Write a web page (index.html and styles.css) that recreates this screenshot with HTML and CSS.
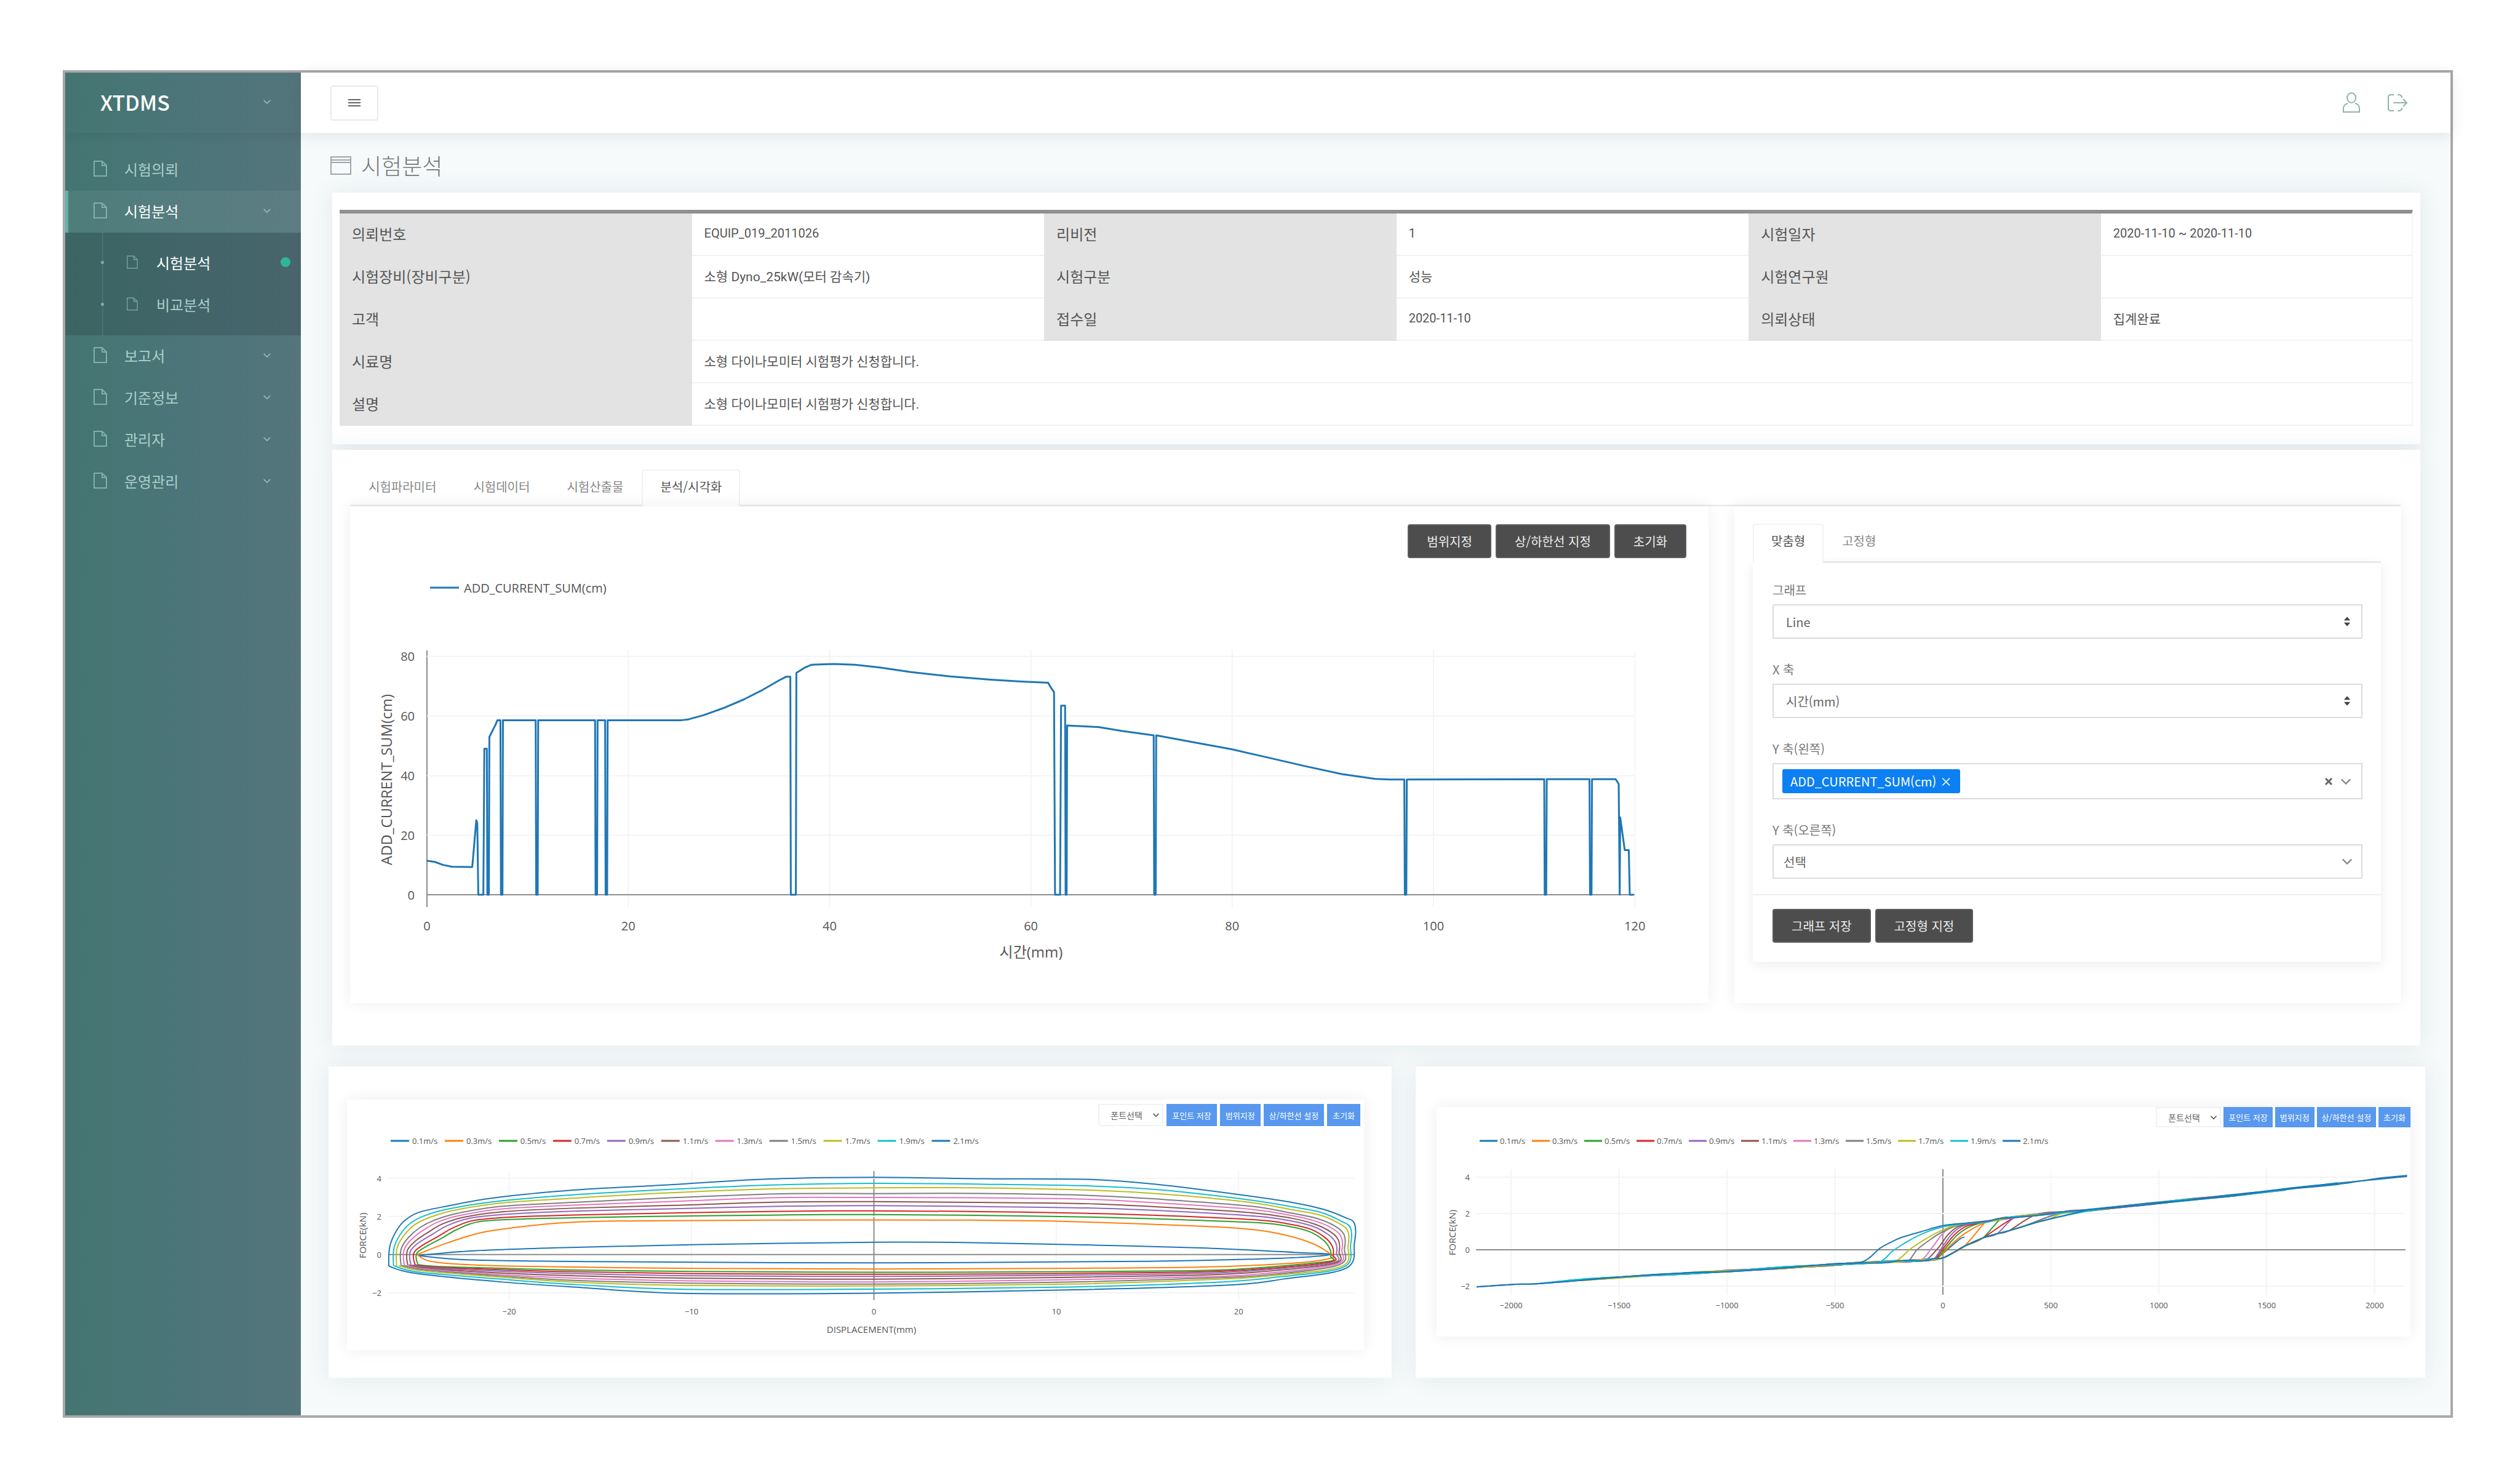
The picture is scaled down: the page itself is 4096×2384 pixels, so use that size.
FILE: index.html
```html
<!DOCTYPE html>
<html lang="ko">
<head>
<meta charset="utf-8">
<title>XTDMS 시험분석</title>
<link rel="stylesheet" href="styles.css">
</head>
<body>
<svg class="sprite" aria-hidden="true">
  <symbol id="i-doc" viewBox="0 0 22 26"><path d="M1 1h13l7 7v17H1zM14 1v7h7" fill="none" stroke="currentColor" stroke-width="2"/></symbol>
  <symbol id="i-down" viewBox="0 0 16 10"><path d="M2 2l6 6 6-6" fill="none" stroke="currentColor" stroke-width="2"/></symbol>
  <symbol id="i-sort" viewBox="0 0 14 20"><path d="M1 8l6-7 6 7zM1 12l6 7 6-7z" fill="currentColor"/></symbol>
</svg>
<div class="frame">
  <aside class="sidebar">
    <a class="brand" href="#"><span>XTDMS</span><svg class="chev"><use href="#i-down"/></svg></a>
    <nav class="menu">
      <a class="item" href="#"><svg class="doc"><use href="#i-doc"/></svg><span>시험의뢰</span></a>
      <a class="item active" href="#"><svg class="doc"><use href="#i-doc"/></svg><span>시험분석</span><svg class="chev"><use href="#i-down"/></svg></a>
      <div class="submenu">
        <a class="subitem current" href="#"><svg class="doc"><use href="#i-doc"/></svg><span>시험분석</span><i class="dot"></i></a>
        <a class="subitem" href="#"><svg class="doc"><use href="#i-doc"/></svg><span>비교분석</span></a>
      </div>
      <a class="item" href="#"><svg class="doc"><use href="#i-doc"/></svg><span>보고서</span><svg class="chev"><use href="#i-down"/></svg></a>
      <a class="item" href="#"><svg class="doc"><use href="#i-doc"/></svg><span>기준정보</span><svg class="chev"><use href="#i-down"/></svg></a>
      <a class="item" href="#"><svg class="doc"><use href="#i-doc"/></svg><span>관리자</span><svg class="chev"><use href="#i-down"/></svg></a>
      <a class="item" href="#"><svg class="doc"><use href="#i-doc"/></svg><span>운영관리</span><svg class="chev"><use href="#i-down"/></svg></a>
    </nav>
  </aside>
  <div class="main">
    <header class="topbar">
      <button class="toggle" type="button" aria-label="메뉴"><svg viewBox="0 0 20 16" width="20" height="16"><path d="M0 3h20M0 8h20M0 13h20" stroke="#666" stroke-width="2"/></svg></button>
      <div class="user">
        <button class="plain" type="button" aria-label="사용자"><svg viewBox="0 0 30 34" width="30" height="34" fill="none" stroke="#8db5a8" stroke-width="2"><ellipse cx="15" cy="9" rx="7" ry="8"/><path d="M9 18C4 19 2 22 2 27v5h26v-5c0-5-2-8-7-9"/></svg></button>
        <button class="plain" type="button" aria-label="로그아웃"><svg viewBox="0 0 34 30" width="34" height="30" fill="none" stroke="#8db5a8" stroke-width="2"><path d="M11 2H6Q2 2 2 6v18q0 4 4 4h5M17 2h2q5 0 5 5M17 28h2q5 0 5-5M10 15h22M26 9l6 6-6 6"/></svg></button>
      </div>
    </header>
    <h1 class="title"><svg viewBox="0 0 34 30" width="34" height="30" fill="none" stroke="#a0a5a8" stroke-width="2"><path d="M1 1h32v28H1zM1 10h32M1 6h32"/></svg>시험분석</h1>

    <section class="card info">
      <table>
        <colgroup><col class="c"><col class="c"><col class="c"><col class="c"><col class="c"><col></colgroup>
        <tr><th scope="row">의뢰번호</th><td class="num">EQUIP_019_2011026</td><th scope="row">리비전</th><td class="num">1</td><th scope="row">시험일자</th><td class="num">2020-11-10 ~ 2020-11-10</td></tr>
        <tr><th scope="row">시험장비(장비구분)</th><td>소형 Dyno_25kW(모터 감속기)</td><th scope="row">시험구분</th><td>성능</td><th scope="row">시험연구원</th><td></td></tr>
        <tr><th scope="row">고객</th><td></td><th scope="row">접수일</th><td class="num">2020-11-10</td><th scope="row">의뢰상태</th><td>집계완료</td></tr>
        <tr><th scope="row">시료명</th><td colspan="5">소형 다이나모미터 시험평가 신청합니다.</td></tr>
        <tr><th scope="row">설명</th><td colspan="5">소형 다이나모미터 시험평가 신청합니다.</td></tr>
      </table>
    </section>

    <section class="card analysis">
      <div class="tabs" role="tablist">
        <button class="tab" type="button" role="tab">시험파라미터</button>
        <button class="tab" type="button" role="tab">시험데이터</button>
        <button class="tab" type="button" role="tab">시험산출물</button>
        <button class="tab on" type="button" role="tab" aria-selected="true">분석/시각화</button>
      </div>
      <div class="split">
        <div class="panel plot">
          <div class="tools">
            <button class="dark" type="button">범위지정</button>
            <button class="dark" type="button">상/하한선 지정</button>
            <button class="dark" type="button">초기화</button>
          </div>
          <svg class="chart big" id="chart-sum" viewBox="0 0 2208 720"></svg>
        </div>
        <div class="panel options">
          <div class="tabs inner" role="tablist">
            <button class="tab on" type="button" role="tab" aria-selected="true">맞춤형</button>
            <button class="tab" type="button" role="tab">고정형</button>
          </div>
          <form class="form">
            <div class="group">
              <label for="graph">그래프</label>
              <div class="field"><select id="graph"><option>Line</option></select><svg class="sort"><use href="#i-sort"/></svg></div>
            </div>
            <div class="group">
              <label for="xaxis">X 축</label>
              <div class="field"><select id="xaxis"><option>시간(mm)</option></select><svg class="sort"><use href="#i-sort"/></svg></div>
            </div>
            <div class="group">
              <label for="yleft">Y 축(왼쪽)</label>
              <div class="multi">
                <button class="tag" type="button">ADD_CURRENT_SUM(cm) <span>×</span></button>
                <input id="yleft" type="text">
                <button class="clear" type="button" aria-label="지우기"><svg viewBox="0 0 14 14" width="14" height="14"><path d="M2 2l10 10M12 2L2 12" stroke="#666" stroke-width="3"/></svg></button>
                <svg class="arrow"><use href="#i-down"/></svg>
              </div>
            </div>
            <div class="group">
              <label for="yright">Y 축(오른쪽)</label>
              <div class="field near"><select id="yright"><option>선택</option></select><svg class="arrow"><use href="#i-down"/></svg></div>
            </div>
            <div class="actions">
              <button class="dark" type="button">그래프 저장</button>
              <button class="dark" type="button">고정형 지정</button>
            </div>
          </form>
        </div>
      </div>
    </section>

    <div class="pair">
      <section class="card left">
        <div class="panel">
          <div class="minitools">
            <div class="field mini"><select aria-label="폰트선택"><option>폰트선택</option></select><svg class="tiny"><use href="#i-down"/></svg></div>
            <button class="blue" type="button">포인트 저장</button>
            <button class="blue" type="button">범위지정</button>
            <button class="blue" type="button">상/하한선 설정</button>
            <button class="blue" type="button">초기화</button>
          </div>
          <svg class="chart" id="chart-disp" viewBox="0 0 1654 364"></svg>
        </div>
      </section>
      <section class="card right">
        <div class="panel">
          <div class="minitools">
            <div class="field mini"><select aria-label="폰트선택"><option>폰트선택</option></select><svg class="tiny"><use href="#i-down"/></svg></div>
            <button class="blue" type="button">포인트 저장</button>
            <button class="blue" type="button">범위지정</button>
            <button class="blue" type="button">상/하한선 설정</button>
            <button class="blue" type="button">초기화</button>
          </div>
          <svg class="chart" id="chart-vel" viewBox="0 0 1583 340"></svg>
        </div>
      </section>
    </div>
  </div>
</div>
<script src="charts.js"></script>
</body>
</html>
```
FILE: styles.css
```css
* { box-sizing: border-box; }
body {
  margin: 0;
  background: #fff;
  color: #666;
  font-family: "Noto Sans CJK KR", "Noto Sans", sans-serif;
  font-size: 20px;
}
button, input, select { font: inherit; color: inherit; margin: 0; }
button { cursor: pointer; white-space: nowrap; }
a { color: inherit; text-decoration: none; }
.sprite { display: none; }

.frame {
  display: flex;
  margin: 114px 109px 80px 102px;
  min-height: calc(100vh - 194px);
  border: 4px solid #a9a9a9;
  background: #f6fafb;
}

/* sidebar */
.sidebar {
  flex: none;
  width: 383px;
  background: linear-gradient(90deg, #447572, #4d757a 60%, #53757b);
  color: #a9cfcb;
  font-size: 24px;
}
.brand {
  display: flex;
  align-items: center;
  justify-content: space-between;
  height: 98px;
  padding: 0 48px 4px 57px;
  color: #fff;
  font-size: 34px;
  font-weight: 500;
  box-shadow: 0 8px 14px rgba(0, 0, 0, .05);
}
.chev { width: 14px; height: 9px; color: #8fb9b8; margin-left: auto; }
.menu { padding-top: 26px; }
.item, .subitem { display: flex; align-items: center; height: 68px; }
.item { padding: 0 48px 4px 46px; border-left: 0 solid #62b3a8; }
.item .doc { width: 22px; height: 26px; margin-right: 28px; color: #7fb0ab; }
.item.active {
  background: rgba(255, 255, 255, .06);
  border-left-width: 5px;
  padding-left: 41px;
  color: #fff;
}
.submenu {
  padding: 14px 17px 17px 60px;
  background: linear-gradient(rgba(255,255,255,.08), rgba(255,255,255,.08)) 60px 0 / 2px 100% no-repeat rgba(0, 0, 0, .13);
}
.subitem::before {
  content: "";
  width: 5px;
  height: 5px;
  margin-left: -2px;
  margin-right: 37px;
  border-radius: 50%;
  background: #86a9a9;
}
.subitem .doc { width: 18px; height: 22px; margin-right: 30px; color: #6f9a99; }
.subitem.current { color: #fff; }
.dot { width: 16px; height: 16px; margin-left: auto; border-radius: 50%; background: #2fb59a; }

/* top bar */
.main { flex: 1; min-width: 0; }
.topbar {
  display: flex;
  align-items: center;
  justify-content: space-between;
  height: 98px;
  padding: 0 69px 0 48px;
  background: #fff;
  box-shadow: 0 4px 24px rgba(40, 30, 50, .1);
}
.toggle {
  display: grid;
  place-items: center;
  width: 78px;
  height: 57px;
  border: 2px solid #e9e9e9;
  border-radius: 4px;
  background: #fff;
}
.user { display: flex; align-items: center; gap: 43px; }
.plain { display: block; padding: 0; border: 0; background: none; }
.plain svg { display: block; }
.title {
  display: flex;
  align-items: center;
  gap: 16px;
  height: 97px;
  margin: 0;
  padding: 26px 0 18px 48px;
  color: #777;
  font-size: 36px;
  font-weight: 300;
  line-height: 53px;
}

/* cards */
.card { background: #fff; box-shadow: 0 0 36px rgba(60, 80, 90, .1); }
.info, .analysis { margin: 0 49px 0 51px; }
.info { padding: 28px 12px 30px; margin-bottom: 9px; }
.info table {
  width: 100%;
  table-layout: fixed;
  border-collapse: separate;
  border-spacing: 0;
  border-top: 6px solid #8f8f8f;
  border-right: 2px solid #f4f4f4;
}
.c { width: 17%; }
.info th, .info td { height: 69px; padding: 0 18px 4px 20px; text-align: left; font-weight: 400; }
.info th { background: #e3e3e3; color: #555; font-size: 24px; }
.info td { border-bottom: 2px solid #f2f2f2; color: #555; font-family: Roboto, "Noto Sans CJK KR", sans-serif; font-size: 21px; }
.info td.num { font-size: 20px; }

.analysis { padding: 32px 32px 69px 29px; }
.tabs { display: flex; border-bottom: 3px solid #ededed; }
.tab {
  height: 57px;
  padding: 0 28px 4px;
  border: 2px solid transparent;
  border-bottom: 0;
  border-radius: 4px 4px 0 0;
  background: none;
  color: #888;
}
.tab.on { margin-bottom: -3px; padding-bottom: 7px; border-color: #f2f2f2; background: #fff; color: #555; height: 60px; }
.split { display: grid; grid-template-columns: 2208fr 1083fr; gap: 42px; }
.panel { min-width: 0; background: #fff; box-shadow: 0 0 24px rgba(0, 0, 0, .07); }
.tools { display: flex; justify-content: flex-end; gap: 7px; padding: 29px 36px 0 0; }
.dark {
  height: 55px;
  padding: 0 29px;
  border: 2px solid #5c5c5c;
  border-radius: 4px;
  background: #4d4d4d;
  color: #eee;
}
.chart { display: block; width: 100%; height: auto; }

.options { padding: 28px 32px 67px 30px; }
.tabs.inner .tab { height: 61px; padding: 0 28px 8px; }
.tabs.inner .tab.on { height: 64px; padding-bottom: 11px; }
.form { padding: 29px 30px 31px 32px; box-shadow: 0 4px 18px rgba(0, 0, 0, .08); }
.group { margin-bottom: 35px; }
.group label { display: block; height: 30px; margin-bottom: 8px; line-height: 30px; color: #777; }
.field { display: grid; align-items: center; }
.field > * { grid-area: 1 / 1; }
.field select {
  appearance: none;
  width: 100%;
  height: 56px;
  padding: 0 20px;
  border: 2px solid #dcdcdc;
  border-radius: 0;
  background: #fff;
}
.field.near select { padding: 0 16px; }
.field svg { justify-self: end; pointer-events: none; }
.sort { width: 12px; height: 18px; margin-right: 19px; color: #444; }
.arrow { width: 20px; height: 12px; margin-right: 15px; color: #888; }
.multi { display: flex; align-items: center; height: 59px; padding-left: 14px; border: 2px solid #dcdcdc; }
.multi input { flex: 1; min-width: 0; height: 40px; border: 0; background: none; }
.tag { height: 39px; padding: 0 13px; border: 0; border-radius: 3px; background: #0c7ff2; color: #fff; line-height: 39px; }
.clear { padding: 0; margin-right: 11px; border: 0; background: none; line-height: 0; }
.actions { display: flex; gap: 7px; margin: -10px -30px 0 -32px; padding: 22px 32px 0; border-top: 2px solid #efefef; }

/* lower charts */
.pair { display: grid; grid-template-columns: 1728fr 1641fr; gap: 39px; margin: 34px 41px 0 45px; padding-bottom: 61px; }
.left { padding: 54px 45px 45px 30px; }
.right { padding: 66px 24px 66px 34px; }
.minitools { display: flex; justify-content: flex-end; gap: 5px; padding: 7px 6px 0 0; }
.right .minitools { padding: 0; gap: 4px; }
.blue { height: 36px; padding: 0 9px; border: 0; background: #5898ee; color: #fff; font-size: 13px; }
.right .blue { height: 33px; padding: 0 8px; }
.field.mini select { width: 106px; height: 36px; padding: 0 18px; border-color: #f0f3f4; font-size: 14px; }
.right .field.mini select { height: 33px; }
.tiny { width: 12px; height: 8px; margin-right: 6px; color: #444; }

.chart text { font-family: "Open Sans", "Noto Sans CJK KR", sans-serif; font-size: 13px; fill: #555; }
.chart .label { font-size: 15px; }
.chart.big text { font-size: 20px; }
.chart.big .label { font-size: 24px; }
.grid { stroke: #f4f4f4; stroke-width: 2; }
.zero { stroke: #8c8c8c; stroke-width: 2; }
.trace { fill: none; stroke-width: 2; stroke-linejoin: round; }
.big .trace { stroke-width: 3; }
```
FILE: charts.js
```js
const NS = 'http://www.w3.org/2000/svg';
const COLORS = ['#1f77b4', '#ff7f0e', '#2ca02c', '#d62728', '#9467bd', '#8c564b', '#e377c2', '#7f7f7f', '#bcbd22', '#17becf', '#1f77b4'];
const SPEEDS = ['0.1', '0.3', '0.5', '0.7', '0.9', '1.1', '1.3', '1.5', '1.7', '1.9', '2.1'].map(s => s + 'm/s');

function add(svg, tag, attrs, content) {
  const el = document.createElementNS(NS, tag);
  for (const k in attrs) el.setAttribute(k, attrs[k]);
  if (content) el.textContent = content;
  svg.appendChild(el);
}
const line = (svg, x1, y1, x2, y2, cls) => add(svg, 'line', { x1, y1, x2, y2, class: cls });
const linear = (zero, unit) => v => zero + v * unit;

// Axes, grid, tick labels and titles
function axes(svg, o) {
  o.xt.forEach(v => line(svg, o.x(v), o.top, o.x(v), o.bottom, v ? 'grid' : 'zero'));
  o.yt.forEach(v => line(svg, o.left, o.y(v), o.right, o.y(v), v ? 'grid' : 'zero'));
  const name = v => String(v).replace('-', '−');
  o.xt.forEach(v => add(svg, 'text', { x: o.x(v), y: o.tickY, 'text-anchor': 'middle', 'dominant-baseline': 'central' }, name(v)));
  o.yt.forEach(v => add(svg, 'text', { x: o.tickX, y: o.y(v), 'text-anchor': 'end', 'dominant-baseline': 'central' }, name(v)));
  const [tx, ty] = o.yPos;
  add(svg, 'text', { x: tx, y: ty, class: 'label', 'text-anchor': 'middle', 'dominant-baseline': 'central', transform: `rotate(-90 ${tx} ${ty})` }, o.yName);
  if (o.xName) add(svg, 'text', { x: o.xPos[0], y: o.xPos[1], class: 'label', 'text-anchor': 'middle', 'dominant-baseline': 'central' }, o.xName);
}
function legend(svg, names, x, y, len, gap, pitch) {
  names.forEach((n, i) => {
    const lx = x + i * pitch;
    add(svg, 'line', { x1: lx, y1: y, x2: lx + len, y2: y, stroke: COLORS[i], 'stroke-width': 3 });
    add(svg, 'text', { x: lx + len + gap, y, 'dominant-baseline': 'central' }, n);
  });
}
function trace(svg, o, pts, color, smooth) {
  const p = pts.map(([a, b]) => [o.x(a), o.y(b)]);
  let d = 'M' + p[0];
  for (let i = 1; i < p.length; i++) {
    if (!smooth) { d += 'L' + p[i]; continue; }
    const a = p[i - 2] || p[i - 1], b = p[i - 1], c = p[i], e = p[i + 1] || c;
    d += `C${b[0] + (c[0] - a[0]) / 6} ${b[1] + (c[1] - a[1]) / 6} ${c[0] - (e[0] - b[0]) / 6} ${c[1] - (e[1] - b[1]) / 6} ${c[0]} ${c[1]}`;
  }
  add(svg, 'path', { d, class: 'trace', stroke: color });
}

// Summary chart
{
  const svg = document.getElementById('chart-sum');
  const o = {
    x: linear(125, 16.36), y: linear(547, -4.84), xt: [0, 20, 40, 60, 80, 100, 120], yt: [0, 20, 40, 60, 80],
    left: 125, right: 2088, top: 150, bottom: 567, tickX: 105, tickY: 597,
    xName: '시간(mm)', xPos: [1107, 639], yName: 'ADD_CURRENT_SUM(cm)', yPos: [58, 360]
  };
  axes(svg, o);
  legend(svg, ['ADD_CURRENT_SUM(cm)'], 130, 48, 47, 8, 0);
  const drop = (x, v) => [[x, v], [x + 0.05, 0], [x + 0.2, 0], [x + 0.25, v]];
  trace(svg, o, [
    [0, 11.4], [0.8, 11], [1.6, 10], [2.5, 9.4], [4.5, 9.3], [4.9, 25], [5, 24], [5.1, 0], [5.6, 0], [5.7, 49], [5.95, 49], [6, 0], [6.15, 0], [6.2, 53],
    [6.8, 57], [7, 58.6], ...drop(7.3, 58.6), ...drop(10.8, 58.6), ...drop(16.7, 58.6), ...drop(17.7, 58.6),
    [25.3, 58.6], [26, 58.9], [27.5, 60.3], [29.4, 62.6], [31.5, 65.6], [33.2, 68.5], [35, 72], [35.7, 73.2], [36.1, 73.2], [36.15, 0], [36.65, 0], [36.7, 74.5],
    [37.5, 76.2], [38.2, 77.2], [40.4, 77.5], [42.5, 77.2], [45, 76.3], [48, 74.8], [52, 73.3], [56, 72.2], [59, 71.6], [61.7, 71.2],
    [62, 69.5], [62.3, 68], [62.4, 0], [62.9, 0], [63, 63.5], [63.4, 63.5], [63.45, 0], [63.55, 0], [63.6, 56.8],
    [66.7, 56.3], [69, 55], ...drop(72.2, 53.5), [76, 51.3], [80, 48.8], [83.5, 46.1], [87.2, 43.2], [90.9, 40.5], [94.2, 38.9], [95.6, 38.7],
    ...drop(97.1, 38.7), ...drop(111, 38.8), ...drop(115.5, 38.8), [118.1, 38.8], [118.4, 37.2], [118.5, 0], [118.55, 26], [119, 15], [119.4, 15], [119.5, 0], [119.9, 0]
  ], COLORS[0]);
}

// Force against displacement: one loop for each speed
{
  const svg = document.getElementById('chart-disp');
  const o = {
    x: linear(857, 29.66), y: linear(209, -31.05), xt: [-20, -10, 0, 10, 20], yt: [-2, 0, 2, 4],
    left: 67, right: 1638, top: 73, bottom: 283, tickX: 56, tickY: 301,
    xName: 'DISPLACEMENT(mm)', xPos: [853, 330], yName: 'FORCE(kN)', yPos: [25, 178]
  };
  axes(svg, o);
  legend(svg, SPEEDS, 71, 24, 30, 5, 88);
  trace(svg, o, [[-25, -.05], [-22, .2], [-17, .37], [-10, .52], [0, .65], [6, .62], [12, .5], [18, .35], [23, .12], [25, 0], [22, -.2], [15, -.35], [0, -.43], [-15, -.37], [-22, -.28], [-25, -.05]], COLORS[0], true);
  trace(svg, o, [[-25.05, 0], [-23.5, .58], [-21.6, 1.14], [-20, 1.38], [-18, 1.6], [-15.7, 1.73], [-11.6, 1.78], [0, 1.82], [6, 1.8], [10, 1.75], [14.3, 1.62], [17.6, 1.5], [20, 1.38], [22, 1.14], [23.9, .64], [25, .05], [25, -.2], [23, -.45], [18, -.65], [10, -.72], [0, -.75], [-10, -.72], [-20, -.6], [-24, -.4], [-25.05, 0]], COLORS[1], true);
  const slow = [[-25, -.53], [-25.1, -.2], [-25.05, .1], [-24.6, .4], [-23.7, .86], [-22.9, 1.3], [-21.8, 1.7], [-20, 1.84], [-16.5, 1.93], [-10.6, 2.02], [-4.8, 2.08], [0, 2.1],
    [5.7, 2.06], [11.7, 1.97], [16.5, 1.84], [21.1, 1.67], [22.8, 1.47], [23.9, 1.2], [24.65, .75], [25, .3], [25.05, -.1], [24.8, -.37],
    [20, -.76], [16.5, -.85], [10, -.9], [0, -.92], [-10, -.88], [-17, -.8], [-21, -.7], [-24, -.62], [-25, -.53]];
  const fast = [[-26.6, -.6], [-26.6, 0], [-26.5, .6], [-26.15, 1.3], [-25.75, 1.8], [-25, 2.18], [-23.6, 2.5], [-20.8, 3], [-16.5, 3.35], [-11.6, 3.65], [-5.8, 3.97], [0, 4.02],
    [6, 4], [11.9, 3.93], [15.6, 3.65], [20.2, 3.15], [23, 2.7], [24.65, 2.37], [25.8, 1.98], [26.35, 1.6], [26.35, .64], [25.9, -.7],
    [22.5, -1.3], [19.3, -1.57], [11, -1.85], [0, -2.03], [-10.5, -2], [-16, -1.75], [-20.4, -1.43], [-25.2, -.95], [-26.6, -.6]];
  const upper = [0, .1, .24, .35, .47, .58, .73, .84, 1], lower = [0, .1, .2, .32, .45, .56, .66, .82, 1];
  upper.forEach((u, i) => {
    const pts = slow.map(([a, b], k) => {
      const t = k > 21 ? lower[i] : u;
      const wave = k > 3 && k < 30 ? Math.sin(k * 2.3 + i) * .03 * t : 0;
      return [a + (fast[k][0] - a) * t, b + (fast[k][1] - b) * t + wave];
    });
    trace(svg, o, pts, COLORS[i + 2], true);
  });
}

// Force against velocity
{
  const svg = document.getElementById('chart-vel');
  const o = {
    x: linear(823, .3509), y: linear(199, -29.5), xt: [-2000, -1500, -1000, -500, 0, 500, 1000, 1500, 2000], yt: [-2, 0, 2, 4],
    left: 64, right: 1575, top: 68, bottom: 272, tickX: 54, tickY: 289, yName: 'FORCE(kN)', yPos: [25, 171]
  };
  axes(svg, o);
  legend(svg, SPEEDS, 70, 22, 29, 4, 85);
  const low = [[-2160, -2.06], [-2000, -1.95], [-1880, -1.84], [-1680, -1.66], [-1460, -1.5], [-1147, -1.27], [-990, -1.17], [-724, -.98], [-505, -.82], [-370, -.72], [-285, -.68], [-215, -.64], [-160, -.62], [-98, -.58], [-70, -.55], [-40, -.52]];
  const high = [[200, 1.55], [270, 1.7], [330, 1.8], [430, 1.92], [560, 2.06], [690, 2.2], [930, 2.5], [1140, 2.76], [1345, 3], [1590, 3.33], [1830, 3.65], [2020, 3.93], [2150, 4.05]];
  const under = [[0, -.45], [50, -.15], [100, .2], [185, .65], [250, .88], [306, 1.05], [370, 1.28], [430, 1.5], [490, 1.68], [560, 1.88]];
  // limit: how far each loop reaches; rise: the climb from the lower branch; end: where the return meets the upper one
  const loops = [
    { limit: 120, rise: [[-10, -.3], [30, .1], [80, .6], [100, .7]], end: 60 },
    { limit: 250, rise: [[-15, -.35], [40, .3], [90, .8], [150, 1.25], [200, 1.52]], end: 110 },
    { limit: 420, rise: [[-20, -.4], [20, .2], [70, .85], [130, 1.3], [200, 1.55]], end: 190 },
    { limit: 700, rise: [[-30, -.45], [10, .2], [55, .85], [110, 1.3], [200, 1.56]], end: 250 },
    { limit: 900, rise: [[-40, -.5], [0, .2], [40, .85], [90, 1.3], [180, 1.55]], end: 275 },
    { limit: 1150, rise: [[-70, -.5], [-15, .2], [25, .85], [75, 1.3], [160, 1.52]], end: 330 },
    { limit: 1350, rise: [[-98, -.55], [-45, .2], [0, .9], [50, 1.3], [140, 1.5]], end: 430 },
    { limit: 1600, rise: [[-160, -.6], [-120, 0], [-60, .55], [0, 1], [70, 1.35], [140, 1.5]], end: 430 },
    { limit: 1750, rise: [[-215, -.6], [-150, .05], [-80, .6], [0, 1.1], [70, 1.38], [140, 1.5]], end: 500 },
    { limit: 1950, rise: [[-285, -.62], [-225, 0], [-110, .8], [0, 1.26], [120, 1.46]], end: 560 },
    { limit: 2200, rise: [[-370, -.65], [-293, .07], [-240, .42], [-192, .68], [-100, 1], [0, 1.33], [120, 1.48]], end: 570 }
  ];
  loops.forEach((l, i) => {
    const shift = ([a, b], k) => [a, b + Math.sin(k * 1.7 + i * 1.3) * .045];
    const first = l.rise[0][0], last = l.rise[l.rise.length - 1][0];
    const up = [...low.filter(p => p[0] < first && p[0] > -l.limit).map(shift), ...l.rise, ...high.filter(p => p[0] > last && p[0] < l.limit).map(shift)];
    const back = [...low.filter(p => p[0] > -l.limit).map(shift), ...under.filter(p => p[0] < l.end), ...high.filter(p => p[0] > l.end + 25 && p[0] < l.limit).map(shift)];
    trace(svg, o, up, COLORS[i], true);
    trace(svg, o, back, COLORS[i], true);
  });
}
```
